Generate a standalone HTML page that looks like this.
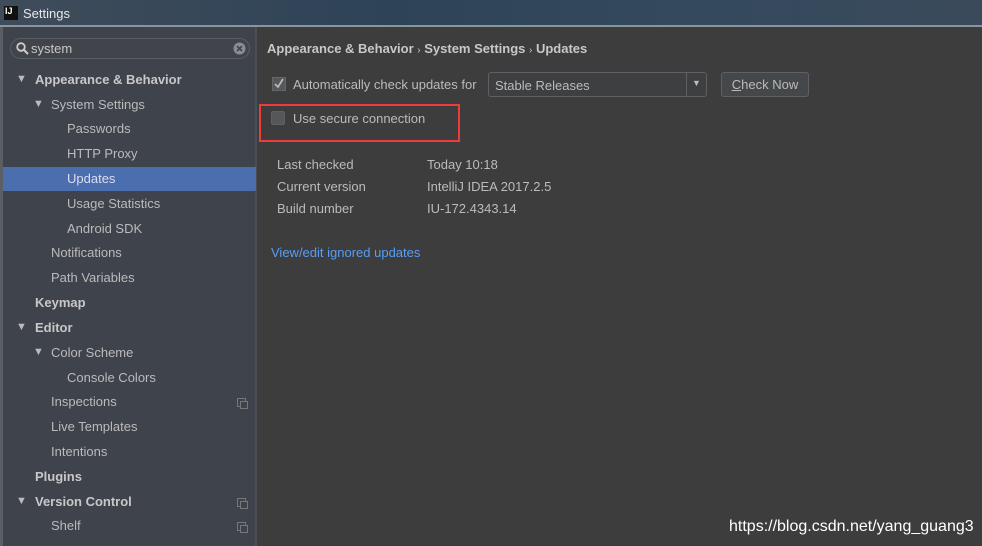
<!DOCTYPE html>
<html><head><meta charset="utf-8"><style>
*{margin:0;padding:0;box-sizing:border-box}
body{width:982px;height:546px;overflow:hidden;background:#3c3f41;font-family:"Liberation Sans","DejaVu Sans",sans-serif;font-size:13px;color:#bbbbbb;position:relative}
.title{position:absolute;left:0;top:0;width:982px;height:27px;background:linear-gradient(90deg,#3f4c5a,#2e4358 40%,#34495e 70%,#3a4a5a);border-bottom:2px solid #8a949c}
.title .ij{position:absolute;left:4px;top:6px;width:14px;height:14px;background:#111;color:#fff;font-size:9px;font-weight:bold;line-height:11px;padding-left:1px}
.title .t{position:absolute;left:23px;top:6px;color:#e8e8e8;font-size:13px}
.left{position:absolute;left:0;top:27px;width:257px;height:519px;background:#3f434b;border-left:3px solid #5a5f66;border-right:2px solid #4a4e55}
.right{position:absolute;left:257px;top:27px;width:725px;height:519px;background:#3d3d3d}
.search{position:absolute;left:10px;top:38px;width:240px;height:21px;border:1px solid #5a5e63;border-radius:11px;background:#41454b}
.search span{position:absolute;left:20px;top:2px;color:#c8c8c8}
.it{position:absolute;left:3px;width:253px;height:24px;line-height:24px;white-space:nowrap}
.b{font-weight:bold;color:#c8c8c8}
.sel{background:#4b6eaf;color:#dde}
.arr{position:absolute;font-size:11px;color:#bbb}
.cp{position:absolute;left:237px;width:9px;height:9px;border:1px solid #777;margin-top:8px}
.cp:after{content:"";position:absolute;left:2px;top:2px;width:6px;height:6px;border:1px solid #777;background:#3f434b}
.a{position:absolute;white-space:nowrap}
</style></head><body>
<div class="title"><div class="ij">IJ</div><div class="t">Settings</div></div>
<div class="left"></div>
<div class="right"></div>
<div class="search"><svg style="position:absolute;left:5px;top:3px" width="13" height="13"><circle cx="5" cy="5" r="3.8" stroke="#ccc" stroke-width="1.8" fill="none"/><line x1="8" y1="8" x2="12" y2="12" stroke="#ccc" stroke-width="2"/></svg><span>system</span><svg style="position:absolute;right:3px;top:3px" width="13" height="13"><circle cx="6.5" cy="6.5" r="6" fill="#8a8d91"/><path d="M4 4L9 9M9 4L4 9" stroke="#41454b" stroke-width="1.6"/></svg></div>
<div class="arr" style="left:16px;top:73px">▼</div><div class="it b" style="top:68px;padding-left:32px">Appearance &amp; Behavior</div>
<div class="arr" style="left:33px;top:98px">▼</div><div class="it" style="top:93px;padding-left:48px">System Settings</div>
<div class="it" style="top:117px;padding-left:64px">Passwords</div>
<div class="it" style="top:142px;padding-left:64px">HTTP Proxy</div>
<div class="it sel" style="top:167px;padding-left:64px">Updates</div>
<div class="it" style="top:192px;padding-left:64px">Usage Statistics</div>
<div class="it" style="top:217px;padding-left:64px">Android SDK</div>
<div class="it" style="top:241px;padding-left:48px">Notifications</div>
<div class="it" style="top:266px;padding-left:48px">Path Variables</div>
<div class="it b" style="top:291px;padding-left:32px">Keymap</div>
<div class="arr" style="left:16px;top:321px">▼</div><div class="it b" style="top:316px;padding-left:32px">Editor</div>
<div class="arr" style="left:33px;top:346px">▼</div><div class="it" style="top:341px;padding-left:48px">Color Scheme</div>
<div class="it" style="top:366px;padding-left:64px">Console Colors</div>
<div class="it" style="top:390px;padding-left:48px">Inspections</div><div class="cp" style="top:390px"></div>
<div class="it" style="top:415px;padding-left:48px">Live Templates</div>
<div class="it" style="top:440px;padding-left:48px">Intentions</div>
<div class="it b" style="top:465px;padding-left:32px">Plugins</div>
<div class="arr" style="left:16px;top:495px">▼</div><div class="it b" style="top:490px;padding-left:32px">Version Control</div><div class="cp" style="top:490px"></div>
<div class="it" style="top:514px;padding-left:48px">Shelf</div><div class="cp" style="top:514px"></div>

<div class="a b" style="left:267px;top:41px">Appearance &amp; Behavior <span style="font-weight:normal;font-size:10px">›</span> System Settings <span style="font-weight:normal;font-size:10px">›</span> Updates</div>
<div class="a" style="left:272px;top:77px;width:14px;height:14px;background:#55585b;border:1px solid #666"><svg width="12" height="12" style="position:absolute;left:0;top:0"><path d="M2 6L5 9L10 1" stroke="#b8b8b8" stroke-width="1.8" fill="none"/></svg></div>
<div class="a" style="left:293px;top:77px">Automatically check updates for</div>
<div class="a" style="left:488px;top:72px;width:219px;height:25px;border:1px solid #5e6064;border-radius:3px;background:#3d3f41"><span style="position:absolute;left:6px;top:5px">Stable Releases</span><div style="position:absolute;right:0;top:0;width:20px;height:23px;border-left:1px solid #5e6064"><span style="position:absolute;left:5px;top:5px;font-size:9px">▼</span></div></div>
<div class="a" style="left:721px;top:72px;width:88px;height:25px;border:1px solid #5e6064;border-radius:3px;background:#45484a;text-align:center;line-height:23px"><u>C</u>heck Now</div>
<div class="a" style="left:271px;top:111px;width:14px;height:14px;background:#55585b;border:1px solid #5f6264;border-radius:2px"></div>
<div class="a" style="left:293px;top:111px">Use secure connection</div>
<div class="a" style="left:259px;top:104px;width:201px;height:38px;border:2px solid #ee3b3b"></div>
<div class="a" style="left:277px;top:157px">Last checked</div><div class="a" style="left:427px;top:157px">Today 10:18</div>
<div class="a" style="left:277px;top:179px">Current version</div><div class="a" style="left:427px;top:179px">IntelliJ IDEA 2017.2.5</div>
<div class="a" style="left:277px;top:201px">Build number</div><div class="a" style="left:427px;top:201px">IU-172.4343.14</div>
<div class="a" style="left:271px;top:245px;color:#589df6">View/edit ignored updates</div>
<div class="a" style="left:729px;top:518px;color:#fff;font-size:16px">https://blog.csdn.net/yang_guang3</div>
</body></html>
